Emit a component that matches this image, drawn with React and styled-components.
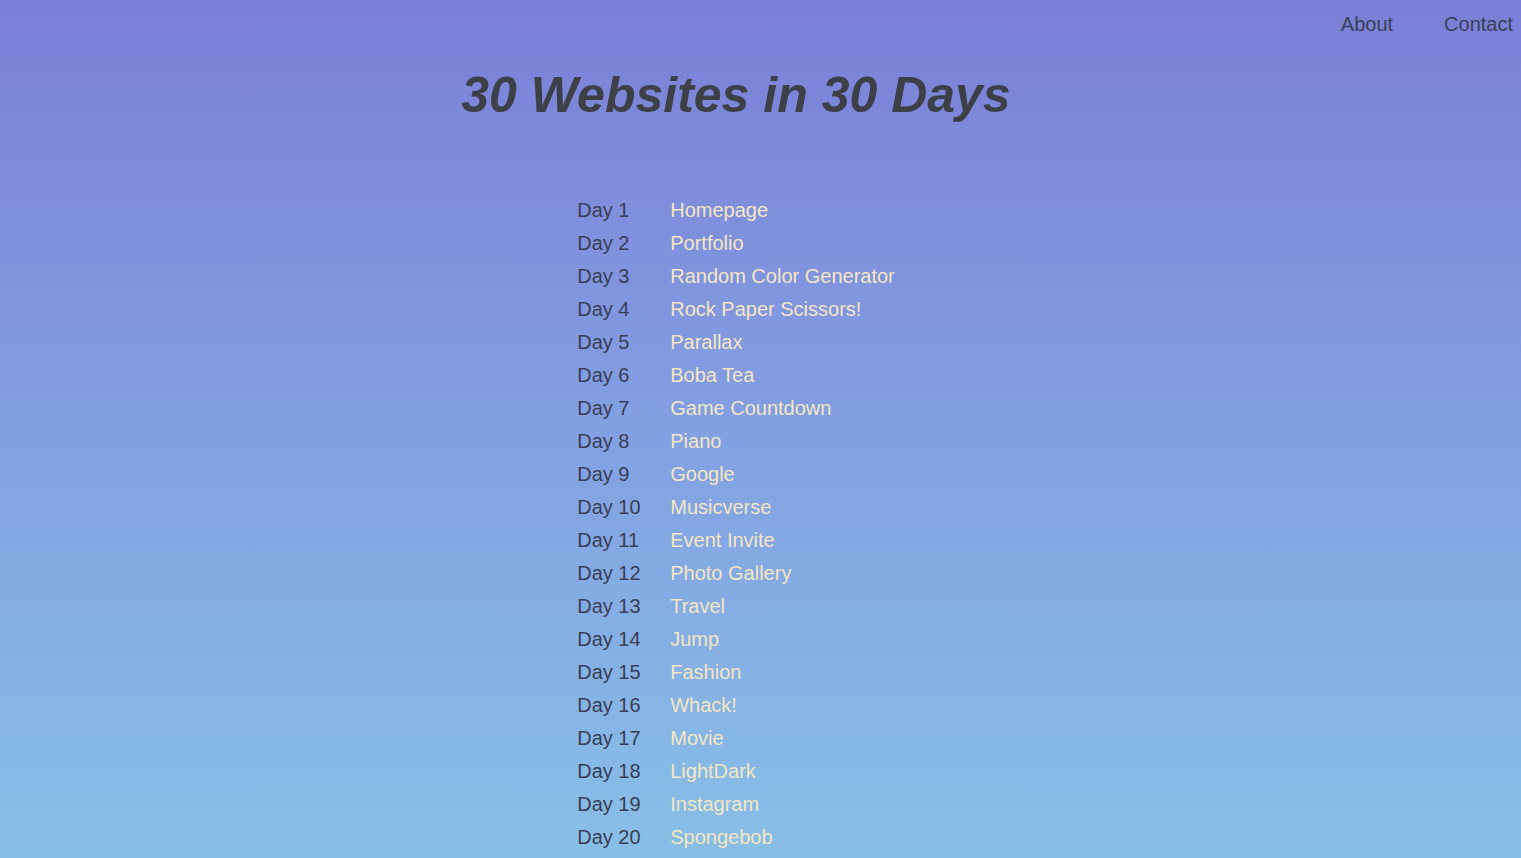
import React from "react";
import styled, { createGlobalStyle } from "styled-components";

const Global = createGlobalStyle`
  html, body { margin: 0; padding: 0; }
  body {
    font-family: "Liberation Sans", Arial, sans-serif;
    min-height: 100vh;
    background: linear-gradient(180deg, #7b7fd6 0%, #82a0e2 50%, #88bfe6 100%);
    background-attachment: fixed;
  }
`;

const Page = styled.div`
  min-height: 100vh;
  display: flex;
  flex-direction: column;
`;

const Nav = styled.nav`
  display: flex;
  justify-content: flex-end;
  gap: 51px;
  padding: 12px 8px 0 0;
`;

const NavLink = styled.a`
  font-size: 20px;
  line-height: 24px;
  color: #3c3f58;
  text-decoration: none;
`;

const Main = styled.main`
  padding-right: 49px;
  display: flex;
  flex-direction: column;
  align-items: center;
`;

const Title = styled.h1`
  margin: 29px 0 0;
  font-size: 50px;
  line-height: 60px;
  font-weight: bold;
  font-style: italic;
  color: #3d4047;
`;

const List = styled.div`
  margin-top: 69px;
  display: grid;
  grid-template-columns: 93px auto;
  grid-auto-rows: 33px;
  align-items: center;
`;

const Day = styled.span`
  font-size: 20px;
  line-height: 33px;
  color: #3a3e56;
`;

const Link = styled.a`
  font-size: 20px;
  line-height: 33px;
  color: #f4e5c3;
  text-decoration: none;
`;

const projects = [
  "Homepage",
  "Portfolio",
  "Random Color Generator",
  "Rock Paper Scissors!",
  "Parallax",
  "Boba Tea",
  "Game Countdown",
  "Piano",
  "Google",
  "Musicverse",
  "Event Invite",
  "Photo Gallery",
  "Travel",
  "Jump",
  "Fashion",
  "Whack!",
  "Movie",
  "LightDark",
  "Instagram",
  "Spongebob",
];

export default function App() {
  return (
    <Page>
      <Global />
      <Nav>
        <NavLink href="#">About</NavLink>
        <NavLink href="#">Contact</NavLink>
      </Nav>
      <Main>
        <Title>30 Websites in 30 Days</Title>
        <List>
          {projects.map((p, i) => (
            <React.Fragment key={p}>
              <Day>Day {i + 1}</Day>
              <Link href="#">{p}</Link>
            </React.Fragment>
          ))}
        </List>
      </Main>
    </Page>
  );
}
